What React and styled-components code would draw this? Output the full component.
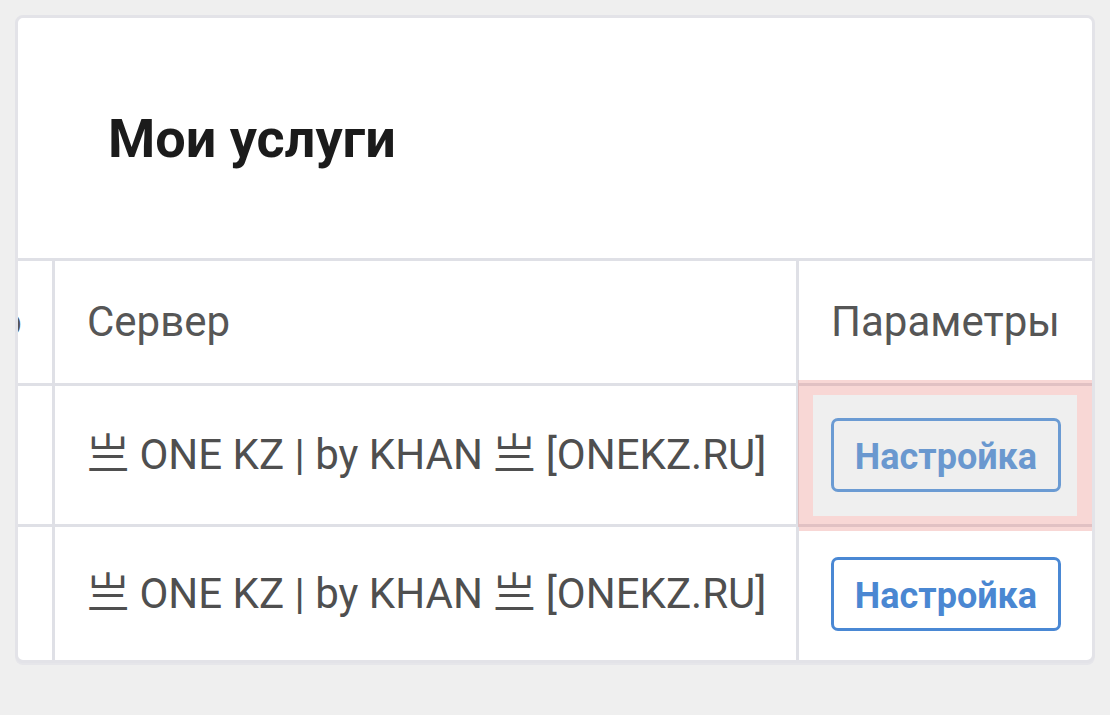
import React from 'react';
import styled, { createGlobalStyle } from 'styled-components';

const rows = [
  { server: '亗 ONE KZ | by KHAN 亗 [ONEKZ.RU]', height: 138, focused: true },
  { server: '亗 ONE KZ | by KHAN 亗 [ONEKZ.RU]', height: 133, focused: false },
];

const App = () => {
  return (
    <>
      <GlobalStyle />
      <Card>
        <Head>
          <Title>Мои услуги</Title>
        </Head>
        <Scroller>
          <Row $height={122}>
            <Cell $first>Фото</Cell>
            <Cell>Сервер</Cell>
            <Cell>Параметры</Cell>
          </Row>
          {rows.map((row, i) => (
            <Row key={i} $height={row.height}>
              <Cell $first />
              <Cell $dark>{row.server}</Cell>
              <Cell>
                {row.focused && <Highlight />}
                <Button $dim={row.focused}>Настройка</Button>
              </Cell>
            </Row>
          ))}
        </Scroller>
      </Card>
    </>
  );
};

const GlobalStyle = createGlobalStyle`
  html, body {
    margin: 0;
    background: #efefef;
  }
  body {
    padding: 15px;
    font-family: Roboto, "Noto Sans CJK SC", sans-serif;
  }
`;

const Card = styled.div`
  background: #ffffff;
  border: 3px solid #e3e3e8;
  border-radius: 8px;
  box-shadow: 0 2px 0 #e6e6ea;
  overflow: hidden;
`;

const Head = styled.div`
  height: 240px;
  display: flex;
  align-items: center;
  padding-left: 90px;
`;

const Title = styled.h2`
  margin: 0;
  font-size: 54px;
  font-weight: 700;
  color: #1b1b1b;
`;

const Scroller = styled.div`
  overflow: hidden;
`;

const Row = styled.div`
  display: grid;
  grid-template-columns: 162px 744px 296px;
  height: ${(p) => p.$height + 3}px;
  border-top: 3px solid #dfe0e6;
  margin-left: -128px;
  box-sizing: border-box;
`;

const Cell = styled.div`
  position: relative;
  display: flex;
  align-items: center;
  justify-content: ${(p) => (p.$first ? 'flex-end' : 'flex-start')};
  padding: ${(p) => (p.$first ? '0 30px 0 0' : '0 0 0 32px')};
  border-left: ${(p) => (p.$first ? 'none' : '3px solid #dfe0e6')};
  font-size: 42px;
  line-height: 50px;
  color: ${(p) => (p.$dark ? '#4f4f4f' : '#565656')};
  white-space: nowrap;
`;

const Highlight = styled.div`
  position: absolute;
  top: -6px;
  left: -1px;
  right: 0;
  bottom: -7px;
  border: 15px solid rgba(232, 122, 115, 0.3);
  background: #efefef;
  background-clip: padding-box;
`;

const Button = styled.button`
  position: relative;
  z-index: 1;
  width: 230px;
  height: 74px;
  border: 3px solid ${(p) => (p.$dim ? '#6b9bd3' : '#4a88d4')};
  border-radius: 7px;
  background: ${(p) => (p.$dim ? 'transparent' : '#ffffff')};
  color: ${(p) => (p.$dim ? '#6a98cf' : '#4a87d2')};
  font-family: Roboto, sans-serif;
  font-size: 36px;
  font-weight: 700;
  padding: 4px 0 0;
  cursor: pointer;
`;

export default App;
